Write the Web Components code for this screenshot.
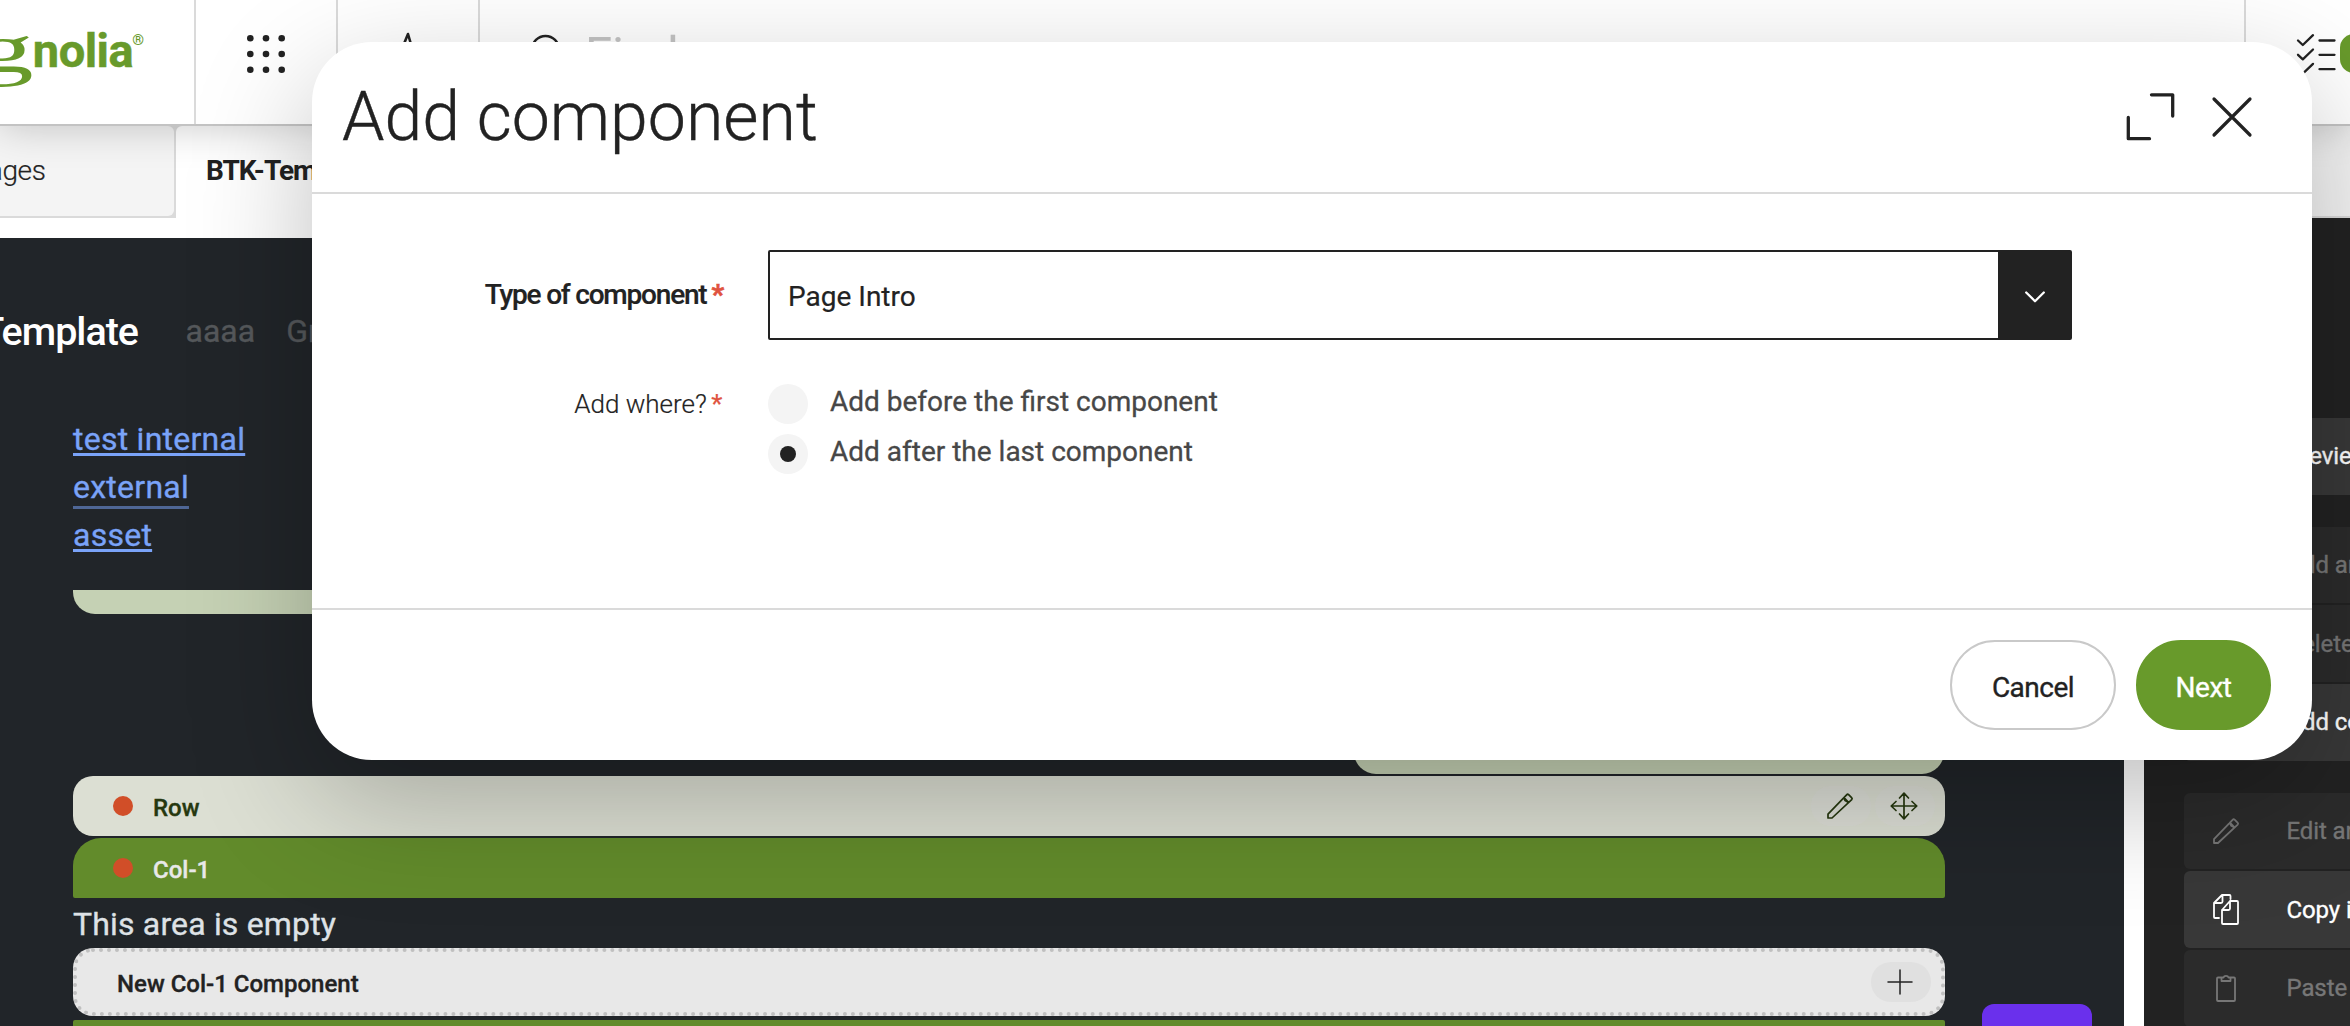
<!DOCTYPE html>
<html lang="en">
<head>
<meta charset="utf-8">
<title>Magnolia - Add component</title>
<style>
html,body{margin:0;height:1026px;overflow:hidden;background:#fff;font-family:Roboto,"Liberation Sans",sans-serif;color:#222}
</style>
</head>
<body>
<magnolia-app></magnolia-app>
<script>
const define = (name, html) => customElements.define(name, class extends HTMLElement {
  constructor() {
    super();
    const t = document.createElement('template');
    t.innerHTML = html;
    this.attachShadow({mode: 'open'}).append(t.content.cloneNode(true));
  }
});

const ICONS = {
  pencil: ['0 0 26 26', '<path d="M1 25v-3.800L19.600 1.800q1-1 2-.2l3 3q1 1 .1 2L5 25zM16.900 4.600l1.200 3 3.400 1.800M17 4.600l4.500 4.800"/>'],
  move: ['0 0 28 28', '<path d="M14 1.500v25M1.500 14h25M9.500 6L14 1.200 18.500 6M9.500 22l4.500 4.800 4.500-4.800M6 9.500L1.200 14 6 18.500M22 9.500l4.800 4.500-4.800 4.500"/>'],
  plus: ['0 0 24 24', '<path d="M12 0v24M0 12h24"/>'],
  copy: ['0 0 26 31', '<path d="M6 24H2q-1 0-1-1V9l8-8h7.500q1 0 1 1v3M1 9h7q1.500 0 1.500-1.500V1"/><path d="M9 16v13q0 1 1 1h14q1 0 1-1V8q0-1-1-1h-7zM9 16h6.500q1.500 0 1.500-1.500V7"/>'],
  paste: ['0 0 20 27', '<path d="M5.500 2.500H2q-1 0-1 1V25q0 1 1 1h16q1 0 1-1V3.500q0-1-1-1h-3.500M5.500 2.500V6h9V2.500h-2q-.5-1.700-2.500-1.700t-2.500 1.700z"/>'],
  grid: ['0 0 40 40', [4.300,20,35.700].map(y => [4.300,20,35.700].map(x => `<circle cx="${x}" cy="${y}" r="3.300" fill="currentColor" stroke="none"/>`).join('')).join('')],
  pulse: ['0 0 36 36', '<path d="M1 24h8l9-22 9 31 4-9h4"/>'],
  search: ['0 0 40 40', '<circle cx="15.500" cy="15.500" r="13.500"/><path d="M25 25l13 13"/>'],
  tasks: ['0 0 40 40', '<path d="M2 6.500L6.800 11 17 1.200M2 20.800l4.800 4.500L17 15.500M2 35.200l4.800 4.500L17 29.900M23.500 6.500h15M23.500 20.800h15M23.500 35.200h15"/>'],
  expand: ['0 0 48 48', '<path d="M25.500 1.800h21.200v21.200M2.300 24.500v21.200h21.200"/>'],
  close: ['0 0 40 40', '<path d="M2 2l36 36M38 2L2 38"/>'],
  chevron: ['0 0 20 12', '<path d="M1.200 1.500L10 10.200l8.800-8.700"/>']
};

customElements.define('ui-icon', class extends HTMLElement {
  connectedCallback() {
    if (this.shadowRoot) return;
    const [box, body] = ICONS[this.getAttribute('name')];
    const [, , w, h] = box.split(' ');
    this.attachShadow({mode: 'open'}).innerHTML = `<style>:host{display:block;flex:none;width:${w}px;height:${h}px}svg{display:block;overflow:visible}</style>
<svg width="${w}" height="${h}" viewBox="${box}" fill="none" stroke="currentColor" stroke-linecap="round" stroke-linejoin="round" stroke-width="${this.getAttribute('stroke') || 1.8}">${body}</svg>`;
  }
});

define('magnolia-logo', `<style>
:host{display:flex;align-items:baseline;justify-content:flex-end;color:#689a2b;height:100%;line-height:102px;margin-top:-7px}
.g{font:400 69px/102px "Liberation Serif",serif;transform:translateY(5px) scaleX(1.75);transform-origin:100% 50%;margin-right:-1px}
.n{font-size:47px;font-weight:700;letter-spacing:-.5px;-webkit-text-stroke:.5px #689a2b}
.r{font-size:15px;font-weight:500;transform:translateY(-22px);margin-left:-1px}
</style><span class="g">g</span><span class="n">nolia</span><span class="r">®</span>`);

define('app-header', `<style>
:host{display:flex;flex:none;height:124px;border-bottom:2px solid #c3c3c3;background:#fff;box-shadow:0 0 42px rgba(0,0,0,.22);position:relative}
.c{box-sizing:border-box;flex:none;border-right:2px solid #dadada;display:flex}
.logo{width:196px;padding-right:50px;justify-content:flex-end}
.apps{width:142px;padding:33.700px 0 0 50px}
.pulse{width:142px;padding:32px 0 0 52px}
.find{width:1766px;padding:33.500px 0 0 50px;gap:15px;color:#222}
.find span{font-size:49px;line-height:59px;margin-top:-9px;color:#c4c4c4}
.tasks{padding:34px 0 0 50px;display:flex;flex:none;gap:4px}
.badge{background:#689a2b;width:60px;height:39px;border-radius:14px;flex:none}
</style>
<div class="c logo"><magnolia-logo></magnolia-logo></div>
<div class="c apps"><ui-icon name="grid"></ui-icon></div>
<div class="c pulse"><ui-icon name="pulse" stroke="2.600"></ui-icon></div>
<div class="c find"><ui-icon name="search" stroke="2.400"></ui-icon><span>Find...</span></div>
<div class="tasks"><ui-icon name="tasks" stroke="2.300"></ui-icon><div class="badge"></div></div>`);

define('app-tabs', `<style>
:host{display:flex;flex:none;height:92px;font-size:28px;background:#dadada;line-height:34px}
div{box-sizing:border-box}
.a{width:174px;height:90px;background:#f4f4f4;border-radius:0 6px 6px 0;padding:28px 128.500px 0 0;display:flex;justify-content:flex-end;font-weight:300;letter-spacing:-.4px;margin-right:2px;-webkit-text-stroke:.2px}
.b{width:1000px;background:#fff;border-radius:6px 6px 0 0;padding:28px 0 0 30px;font-weight:700;letter-spacing:-1px}
.c{flex:1;height:90px;background:#f4f4f4}
</style><div class="a">Pages</div><div class="b">BTK-Template</div><div class="c"></div>`);

define('edit-bar', `<style>
:host{display:flex;flex:none;box-sizing:border-box;align-items:center;height:60px;border-radius:20px;background:#dcdfd3;color:#26380f;padding:0 10px 0 40px;font-size:24px;font-weight:500;-webkit-text-stroke:.35px;margin-bottom:2px}
:host([kind=area]){background:#628b2b;color:#e8e8e8;border-radius:28px 28px 2px 2px;margin:0}
:host([kind=new]){background:#e8e8e8;border:4px dotted #c0c0c0;height:68px;color:#222;padding:0 10px 0 40px;margin-bottom:4px}
i{width:20px;height:20px;border-radius:50%;background:#d14e28;margin-right:20px}
:host([kind=new]) i{display:none}
span{flex:1;line-height:28px;padding-top:3px}
.x{display:flex;gap:4px}
</style><i></i><span><slot></slot></span><div class="x"><slot name="tools"></slot></div>`);

define('round-tool', `<style>
:host{display:flex;box-sizing:border-box;width:60px;height:40px;border-radius:20px;background:rgba(224,224,224,.35);align-items:center;justify-content:center;padding:0 1.500px 1px 0}
:host([solid]){background:#e0e0e0}
</style><slot></slot>`);

define('page-frame', `<style>
:host{display:flex;flex-direction:column;flex:none;box-sizing:border-box;width:2124px;background:#212529;padding:0 179px 0 73px;margin-top:20px;overflow:hidden;font-size:32px;color:#dee2e6;position:relative;-webkit-text-stroke:.35px}
nav{display:flex;align-items:center;flex:none;height:166.500px;padding-top:10px;margin-left:-94px;color:#55585b}
nav b{width:159px;display:flex;justify-content:flex-end;color:#fff;font-size:39.500px;font-weight:500;letter-spacing:-1px;-webkit-text-stroke:0;margin-right:47.500px}
nav span{margin-right:31px}
.links{display:flex;flex-direction:column;align-items:flex-start;line-height:48px;height:144px;margin-bottom:31.500px;letter-spacing:.25px}
a{color:#7aa3f8;text-decoration:underline 3px;text-underline-offset:2.500px;text-decoration-skip-ink:none}
a.e{text-decoration-color:#4f6796;text-underline-offset:8px}
.end{flex:none;height:24px;background:#c5d1b4;border-radius:0 0 22px 22px}
.end.half{width:590px;margin:136px 1px 2px auto}
p{margin:0;height:47px;padding-top:3px;line-height:47px;letter-spacing:.17px}
.low{flex:none;height:30px;background:#628b2b;border-radius:2px}
.fab{position:absolute;left:1982px;top:766px;width:110px;height:60px;border-radius:12px;background:#6a30ec}
</style>
<nav><b>Template</b><span>aaaa</span><span>Group</span></nav>
<div class="links"><a>test internal</a><a class="e">external</a><a>asset</a></div>
<div class="end"></div>
<div class="end half"></div>
<edit-bar>Row<round-tool slot="tools"><ui-icon name="pencil" stroke="1.700"></ui-icon></round-tool><round-tool slot="tools"><ui-icon name="move" stroke="1.700"></ui-icon></round-tool></edit-bar>
<edit-bar kind="area">Col-1</edit-bar>
<p>This area is empty</p>
<edit-bar kind="new">New Col-1 Component<round-tool solid slot="tools"><ui-icon name="plus" stroke="1.500"></ui-icon></round-tool></edit-bar>
<div class="low"></div>
<div class="fab"></div>`);

define('action-item', `<style>
:host{display:flex;flex:none;box-sizing:border-box;align-items:center;width:360px;height:76.670px;margin-bottom:2px;border-radius:6px;background:#383838;color:#fff;font-size:24px;white-space:nowrap;letter-spacing:-.1px;-webkit-text-stroke:.35px}
:host([off]){background:#2b2b2b;color:#777}
:host([last]){margin-bottom:32px}
.i{width:84px;flex:none;display:flex;justify-content:center;margin-right:18.500px}
.t{line-height:30px}
</style><div class="i"><slot name="icon"></slot></div><div class="t"><slot></slot></div>`);

define('action-panel', `<style>
:host{display:flex;flex-direction:column;flex:1;min-width:0;margin-left:20px;background:#222;padding:200px 0 0 40px;overflow:hidden}
</style>
<action-item last>Preview page</action-item>
<action-item off>Add area</action-item>
<action-item off>Delete area</action-item>
<action-item last>Add component</action-item>
<action-item off><ui-icon slot="icon" name="pencil"></ui-icon>Edit area</action-item>
<action-item><ui-icon slot="icon" name="copy"></ui-icon>Copy item</action-item>
<action-item off><ui-icon slot="icon" name="paste"></ui-icon>Paste item</action-item>`);

define('form-row', `<style>
:host{display:flex;gap:46px;align-items:flex-start}
.l{width:410px;flex:none;display:flex;justify-content:flex-end;gap:4.500px;font-size:26px;font-weight:300;height:40px;line-height:40px;-webkit-text-stroke:.2px}
:host([strong]) .l{font-size:28px;font-weight:500;height:90px;line-height:89px;letter-spacing:-1.200px;gap:5px;-webkit-text-stroke:.2px}
b{color:#e0533f;font-weight:400;margin-right:-.5px}
:host([strong]) b{font-weight:700;margin-right:-1px;-webkit-text-stroke:.6px}
.c{width:1304px;display:flex;flex-direction:column;gap:10px}
</style><div class="l"><slot name="label"></slot><b>*</b></div><div class="c"><slot></slot></div>`);

define('select-box', `<style>
:host{display:flex;box-sizing:border-box;height:90px;border:2px solid #222;border-radius:2px;font-size:28px;color:#222;-webkit-text-stroke:.2px}
.v{flex:1;padding:2px 0 0 18px;line-height:86px}
.a{width:72px;background:#222;color:#fff;display:flex;align-items:center;justify-content:center;padding:3px 0 0 1px;box-sizing:border-box}
</style><div class="v"><slot></slot></div><div class="a"><ui-icon name="chevron" stroke="2.300"></ui-icon></div>`);

define('radio-option', `<style>
:host{display:flex;height:40px;gap:22px;font-size:28px;color:#474747;line-height:36px;-webkit-text-stroke:.3px}
i{width:40px;height:40px;border-radius:50%;background:#f4f4f4;display:flex;align-items:center;justify-content:center}
:host([checked]) i::after{content:"";width:16px;height:16px;border-radius:50%;background:#222}
</style><i></i><span><slot></slot></span>`);

define('pill-button', `<style>
:host{display:flex;box-sizing:border-box;align-items:center;justify-content:center;height:90px;width:166px;border:2px solid #c9c9c9;border-radius:45px;font-size:28px;letter-spacing:-.5px;line-height:34px;padding-top:6px;color:#222;-webkit-text-stroke:.35px}
:host([primary]){width:135px;border-color:#689a2b;background:#689a2b;color:#fff}
</style><slot></slot>`);

define('modal-dialog', `<style>
:host{position:absolute;left:312px;top:42px;width:2000px;height:718px;border-radius:60px;background:#fff;box-shadow:0 40px 120px rgba(0,0,0,.25);display:flex;flex-direction:column;overflow:hidden}
header{height:150px;border-bottom:2px solid #dadada;display:flex;align-items:center;padding:0 60px 0 30px;gap:38px}
h1{flex:1;font-size:68px;font-weight:300;margin:0;line-height:80px;-webkit-text-stroke:.4px}
main{flex:1;padding-top:56px;display:flex;flex-direction:column;gap:44px}
footer{height:152px;box-sizing:border-box;border-top:2px solid #dadada;display:flex;justify-content:flex-end;gap:20px;padding:30px 41px 0}
</style>
<header><h1><slot name="title"></slot></h1><ui-icon name="expand" stroke="3.300"></ui-icon><ui-icon name="close" stroke="3.200"></ui-icon></header>
<main><slot></slot></main>
<footer><slot name="actions"></slot></footer>`);

define('magnolia-app', `<style>
:host{display:flex;flex-direction:column;position:relative;width:2350px;height:1026px;overflow:hidden;white-space:nowrap}
.work{display:flex;flex:1;min-height:0}
</style>
<app-header style="z-index:1"></app-header>
<app-tabs></app-tabs>
<div class="work"><page-frame></page-frame><action-panel></action-panel></div>
<modal-dialog style="z-index:2">
<span slot="title">Add component</span>
<form-row strong><span slot="label">Type of component</span><select-box>Page Intro</select-box></form-row>
<form-row><span slot="label">Add where?</span><radio-option>Add before the first component</radio-option><radio-option checked>Add after the last component</radio-option></form-row>
<pill-button slot="actions">Cancel</pill-button><pill-button slot="actions" primary>Next</pill-button>
</modal-dialog>`);
</script>
</body>
</html>
